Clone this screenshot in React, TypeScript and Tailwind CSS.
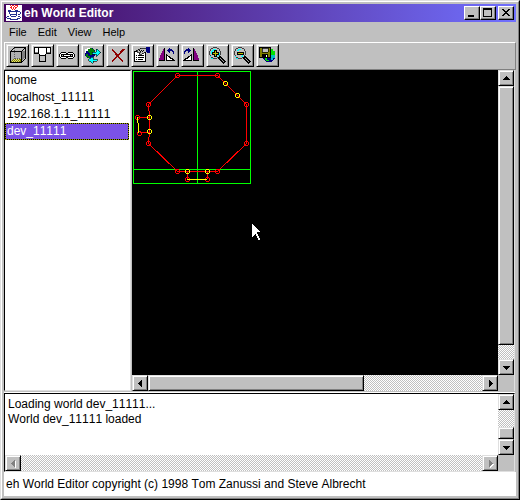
import { useState } from 'react'
import type { ReactNode } from 'react'

const menus = ['File', 'Edit', 'View', 'Help']

const worlds = ['home', 'localhost_11111', '192.168.1.1_11111', 'dev_11111']

const log = 'Loading world dev_11111...\nWorld dev_11111 loaded'

const tools: { label: string; icon: ReactNode }[] = [
  {
    label: 'Wireframe',
    icon: (
      <>
        <path d="M3 5h10v11H3z" fill="#b0b0b0" />
        <path d="M5 13h9v1h-1v2H3v-1h1v-1h1z" fill="#808000" />
        <path d="M5 14h1v1H5zM7 14h1v1H7zM9 14h1v1H9zM11 14h1v1h-1zM6 13h1v1H6zM8 13h1v1H8zM10 13h1v1h-1zM4 15h1v1H4zM6 15h1v1H6zM8 15h1v1H8zM10 15h1v1h-1z" fill="#e0e080" />
        <path d="M6.5 2v11M6.5 12.5H17" stroke="#606060" strokeDasharray="1 1" fill="none" />
        <path d="M14 5h3v7h-1v1h-1v1h-1z" fill="#808080" />
        <path d="M2.5 5.5h11v11h-11zM2.5 5.5l4-4h11v11l-4 4M13.5 5.5l4-4" stroke="#000" fill="none" />
      </>
    ),
  },
  {
    label: 'Sector',
    icon: (
      <>
        <path d="M1.5 1.5h16v6h-16z" fill="#fff" stroke="#000" />
        <path d="M5 2h1v6H5zM13 2h1v6h-1z" fill="#000" />
        <path d="M2 6h3v1H2zM14 6h3v1h-3z" fill="#808080" />
        <path d="M6 2h7v7H6z" fill="#fff" />
        <path d="M6.5 9.5h6v6h-6z" fill="#c0c0c0" stroke="#000" />
        <path d="M6 8h1v2H6zM12 8h1v2h-1z" fill="#000" />
      </>
    ),
  },
  {
    label: 'Link',
    icon: (
      <>
        <path d="M3 6h5v1h2V6h5v1h1v1h1v3h-1v1h-1v1h-5v-1H8v1H3v-1H2v-1H1V8h1V7h1z" fill="#000" />
        <path d="M3 7h5v1H3zM2 8h1v3H2zM3 11h5v1H3zM10 7h5v1h-5zM15 8h1v3h-1zM10 11h5v1h-5zM6 9h6v1H6z" fill="#fff" />
        <path d="M4 9h1v1H4zM13 9h1v1h-1z" fill="#c0c0c0" />
      </>
    ),
  },
  {
    label: 'Reload world',
    icon: (
      <>
        <circle cx="7" cy="7" r="5.5" fill="#000080" />
        <path d="M5 2h4v1h2v2h1v2H9v2H7V7H6V6H5z" fill="#008000" />
        <path d="M3 8h2v2h2v2H5v-1H3z" fill="#008000" />
        <path d="M2 3h2V2h3v1H5v2H3v2H2z" fill="#fff" />
        <path d="M9 6h4V3h1l4 3.500l-4 3.500h-1V8H9z" fill="#00ffff" stroke="#000" strokeWidth="0.6" />
        <path d="M14 13h-4v-2H9l-4 3 4 3h1v-2h4z" fill="#00ffff" stroke="#000" strokeWidth="0.6" />
      </>
    ),
  },
  {
    label: 'Delete',
    icon: <path d="M4 3.5l11 12M16 3L4 15.5" stroke="#900000" strokeWidth="1.6" fill="none" />,
  },
  {
    label: 'Properties',
    icon: (
      <>
        <path d="M1.5 5.5h11v10h-11z" fill="#fff" stroke="#000" />
        <path d="M3 9h1v1H3zM5 9h6v1H5zM3 11h1v1H3zM5 11h6v1H5zM3 13h1v1H3zM5 13h5v1H5z" fill="#000" />
        <path d="M3 4h2V3h2V2h6v4h-2v1H9v1H6V7h1V6H4V5H3z" fill="#c0c0c0" stroke="#000" strokeWidth="0.7" />
        <path d="M6 4h1v1H6zM8 4h1v1H8zM7 5h1v1H7zM9 5h1v1H9zM10 4h1v1h-1z" fill="#000" />
        <path d="M13 1h4v6h-3V6h-1z" fill="#000080" />
      </>
    ),
  },
  {
    label: 'Rotate left',
    icon: (
      <>
        <path d="M6 3v11H1v-2h1v-3h1V7h1V5h1V3z" fill="#800080" />
        <path d="M6.5 2v12.5H1" stroke="#000" fill="none" />
        <path d="M8 8h1v1h1v1h2v1h1v1h2v1h1v1h1v1H8zM9 10v4h5v-1h-2v-1h-1v-1h-1v-1z" fill="#000" fillRule="evenodd" />
        <path d="M9 10h1v1h1v1h1v1h2v1H9z" fill="#fff" />
        <path d="M9 4h1V3h1V2h1v1h2v1h1v1h1v3h-1V6h-1V5h-2v2h-1V6h-1V5H9z" fill="#000080" />
      </>
    ),
  },
  {
    label: 'Rotate right',
    icon: (
      <>
        <path d="M11 3h1v2h1v2h1v2h1v3h1v2h-5z" fill="#800080" />
        <path d="M10.500 2v12.500H16" stroke="#000" fill="none" />
        <path d="M9 8H8v1H7v1H5v1H4v1H2v1H1v1H0v1h9z" fill="#000" />
        <path d="M8 10H7v1H6v1H5v1H3v1h5z" fill="#fff" />
        <path d="M8 4H7V3H6V2H5v1H3v1H2v1H1v3h1V6h1V5h2v2h1V6h1V5h1z" fill="#000080" />
      </>
    ),
  },
  {
    label: 'Zoom in',
    icon: (
      <>
        <circle cx="7" cy="7" r="5.5" fill="#c0c0c0" stroke="#404040" />
        <path d="M3 5h1V4h1V3h3v1H6v1H5v3H3zM11 7h1v2h-1v1h-1v1H8v-1h2V8h1zM2 10h1v1H2zM3 12h2v1H3z" fill="#00ffff" />
        <path d="M6 4h3v2h2v3H9v2H6V9H4V6h2z" fill="#000" />
        <path d="M7 5h1v2h2v1H8v2H7V8H5V7h2z" fill="#c0c000" />
        <path d="M11 11l6 6" stroke="#000" strokeWidth="3" />
        <path d="M12 12l4 4" stroke="#a0a0a0" />
      </>
    ),
  },
  {
    label: 'Zoom out',
    icon: (
      <>
        <circle cx="7" cy="7" r="5.5" fill="#c0c0c0" stroke="#404040" />
        <path d="M3 5h1V4h1V3h3v1H6v1H3zM11 8v1h-1v2H8v-1h1V9zM2 10h1v1H2zM3 12h2v1H3z" fill="#00ffff" />
        <path d="M4 6h7v3H4z" fill="#000" />
        <path d="M5 7h5v1H5z" fill="#c0c000" />
        <path d="M11 11l6 6" stroke="#000" strokeWidth="3" />
        <path d="M12 12l4 4" stroke="#a0a0a0" />
      </>
    ),
  },
  {
    label: 'Save world',
    icon: (
      <>
        <circle cx="11" cy="9.500" r="6.500" fill="#000080" />
        <path d="M12 3h3v2h2v5h-1v2h-3v-2h-1zM7 12h2v2h2v1H8v-1H7z" fill="#00e000" />
        <path d="M13 9h4v3h-2v2h-2z" fill="#00c0c0" />
        <path d="M1.500 1.500h11v10h-11z" fill="#808000" stroke="#000" />
        <path d="M4 2h6v4H4z" fill="#c0c0c0" stroke="#000" strokeWidth="0.7" />
        <path d="M4 8h6v3H4z" fill="#000" />
        <path d="M8 9h1v2H8z" fill="#fff" />
      </>
    ),
  },
]

const redNodes = [
  [45, 5], [85, 5], [114, 34], [114, 73], [85, 101], [45, 101], [16, 73], [16, 34],
  [5, 47], [7, 63], [55, 109], [75, 109],
]

const yellowNodes = [
  [93, 13], [105, 25], [17, 47], [17, 61], [55, 101], [75, 101],
]

const arrows = {
  up: 'M7 5h1v1h1v1h1v1h1v1H4V8h1V7h1V6h1z',
  down: 'M4 6h7v1h-1v1H9v1H8v1H7V9H6V8H5V7H4z',
  left: 'M9 4v7H8v-1H7V9H6V8H5V7h1V6h1V5h1V4z',
  right: 'M6 4h1v1h1v1h1v1h1v1H9v1H8v1H7v1H6z',
}

function ScrollButton({ dir, disabled }: { dir: keyof typeof arrows; disabled?: boolean }) {
  return (
    <button
      disabled={disabled}
      aria-label={`Scroll ${dir}`}
      className="size-4 shrink-0 border border-t-[#dfdfdf] border-l-[#dfdfdf] border-r-black border-b-black bg-[#c0c0c0] shadow-[inset_1px_1px_0_#fff,inset_-1px_-1px_0_#808080]"
    >
      <svg viewBox="0 0 14 14" className="size-3.5" shapeRendering="crispEdges">
        {disabled && <path d={arrows[dir]} fill="#fff" transform="translate(1 1)" />}
        <path d={arrows[dir]} fill={disabled ? '#808080' : '#000'} />
      </svg>
    </button>
  )
}

function Thumb({ className }: { className: string }) {
  return (
    <div
      className={`border border-t-[#dfdfdf] border-l-[#dfdfdf] border-r-black border-b-black bg-[#c0c0c0] shadow-[inset_1px_1px_0_#fff,inset_-1px_-1px_0_#808080] ${className}`}
    />
  )
}

const track = 'bg-[repeating-conic-gradient(#c0c0c0_0_25%,#fff_0_50%)] bg-[length:2px_2px]'

function MapView() {
  return (
    <svg width="125" height="120" shapeRendering="crispEdges" fill="none" role="img" aria-label="Map of dev_11111">
      <g stroke="#00ff00">
        <path d="M1.5 1.5h117v112h-117zM65.5 1v112M1 99.5h117" />
      </g>
      <g stroke="#ff0000">
        <path d="M45.5 5.5h40l29 29v39l-29 28h-40l-29-28l1-12v-14l-1-13zM5.5 47.5h12M7.5 62.5h10M55.5 101v8M75.5 101v8" />
        {redNodes.map(([x, y]) => (
          <path key={`${x}-${y}`} d={`M${x - 1} ${y - 1.5}h3M${x - 1} ${y + 2.5}h3M${x - 1.5} ${y - 1}v3M${x + 2.5} ${y - 1}v3`} />
        ))}
      </g>
      <g stroke="#ffff00">
        <path d="M5.5 47v6M6.5 53v10M55 109.5h20" />
        {yellowNodes.map(([x, y]) => (
          <path key={`${x}-${y}`} d={`M${x - 1} ${y - 1.5}h3M${x - 1} ${y + 2.5}h3M${x - 1.5} ${y - 1}v3M${x + 2.5} ${y - 1}v3`} />
        ))}
      </g>
    </svg>
  )
}

function JavaLogo() {
  return (
    <svg viewBox="0 0 16 16" className="size-4" shapeRendering="crispEdges">
      <path d="M0 0h16v16H0z" fill="#fff" />
      <path d="M4 0h1v1H4zM6 0h2v1H6zM9 0h3v1H9zM5 1h1v1H5zM8 1h1v1H8zM11 1h1v1h-1zM4 2h2v1H4zM7 2h1v1H7zM9 2h2v1H9zM5 3h1v1H5zM7 3h1v1H7zM9 3h1v1H9zM6 4h1v1H6zM8 4h1v1H8z" fill="#ff2020" />
      <path d="M2 5h3v1H2zM9 5h3v1H9zM2 6h10v1H2zM12 6h2v1h-2zM14 7h1v2h-1zM12 9h2v1h-2zM3 7h1v2H3zM10 7h1v2h-1zM4 9h7v1H4zM4 10h1v1H4zM10 10h1v1h-1zM5 11h5v1H5zM1 11h2v1H1zM0 12h1v1H0zM12 11h2v1h-2zM14 12h1v1h-1zM1 13h4v1H1zM11 13h3v1h-3zM4 14h8v1H4z" fill="#203090" />
    </svg>
  )
}

const caption =
  'flex h-3.5 w-4 items-center justify-center border border-t-white border-l-white border-r-black border-b-black bg-[#c0c0c0] shadow-[inset_-1px_-1px_0_#808080]'

export default function App() {
  const [selected, setSelected] = useState('dev_11111')

  return (
    <div className="flex h-screen flex-col border border-t-[#dfdfdf] border-l-[#dfdfdf] border-r-black border-b-black bg-[#c0c0c0] font-['Liberation_Sans',Arial,sans-serif] text-xs text-black [font-kerning:none]">
      <div className="flex min-h-0 flex-1 flex-col border border-t-white border-l-white border-r-[#808080] border-b-[#808080] p-0.5">
        {/* Title bar */}
        <header className="flex h-[18px] shrink-0 items-center bg-linear-to-r from-[#40005c] to-[#7070ff] px-0.5">
          <JavaLogo />
          <h1 className="ml-0.5 flex-1 text-xs font-bold text-white">eh World Editor</h1>
          <button aria-label="Minimize" className={caption}>
            <svg viewBox="0 0 14 12" className="h-3 w-3.5" shapeRendering="crispEdges">
              <path d="M3 8h6v2H3z" />
            </svg>
          </button>
          <button aria-label="Maximize" className={caption}>
            <svg viewBox="0 0 14 12" className="h-3 w-3.5" shapeRendering="crispEdges">
              <path d="M2 1h9v9H2zM3 3v6h7V3z" fillRule="evenodd" />
            </svg>
          </button>
          <button aria-label="Close" className={`ml-0.5 ${caption}`}>
            <svg viewBox="0 0 14 12" className="h-3 w-3.5" shapeRendering="crispEdges">
              <path d="M3 2h2v1h1v1h2V3h1V2h2v1h-1v1H9v1H8v1h1v1h1v1h1v1H9V8H8V7H6v1H5v1H3V8h1V7h1V6h1V5H5V4H4V3H3z" />
            </svg>
          </button>
        </header>

        <nav className="flex h-5 shrink-0 items-center gap-[11px] px-[5px]">
          {menus.map((menu) => (
            <button key={menu} className="text-[11px]">
              {menu}
            </button>
          ))}
        </nav>

        {/* Toolbar */}
        <div className="flex h-7 shrink-0 gap-0.5 border border-t-white border-l-white border-r-[#808080] border-b-[#808080] px-px py-px">
          {tools.map((tool) => (
            <button
              key={tool.label}
              aria-label={tool.label}
              title={tool.label}
              className="size-[23px] shrink-0 border border-t-[#dfdfdf] border-l-[#dfdfdf] border-r-black border-b-black bg-[#c0c0c0] p-px shadow-[inset_1px_1px_0_#fff,inset_-1px_-1px_0_#808080]"
            >
              <svg viewBox="0 0 19 19" className="size-[19px]" shapeRendering="crispEdges">
                {tool.icon}
              </svg>
            </button>
          ))}
        </div>

        {/* World list and map */}
        <main className="flex min-h-0 flex-1 gap-px pr-px">
          <ul className="w-[127px] shrink-0 border border-t-black border-l-black border-r-[#dfdfdf] border-b-[#dfdfdf] bg-white pt-px pr-px">
            {worlds.map((world) => (
              <li key={world}>
                <button
                  onClick={() => setSelected(world)}
                  aria-pressed={world === selected}
                  className={`block h-[17px] w-full border border-dotted text-left leading-[15px] ${
                    world === selected ? 'border-[#a0a000] bg-black text-white' : 'border-transparent'
                  }`}
                >
                  <span className={`block px-px ${world === selected ? 'bg-[#7b52e7]' : ''}`}>{world}</span>
                </button>
              </li>
            ))}
          </ul>

          <section className="flex min-w-0 flex-1 flex-col border-r border-r-[#dfdfdf]">
            <div className="flex min-h-0 flex-1">
              <div className="relative min-w-0 flex-1 overflow-hidden bg-black">
                <MapView />
                {/* Mouse pointer */}
                <svg className="absolute top-[154px] left-[119px] h-[18px] w-3" viewBox="0 0 12 18" shapeRendering="crispEdges">
                  <path d="M1 0h1v1h1v1h1v1h1v1h1v1h1v1h1v1h1v1H6v2h1v2h1v2h1v2H7v-2H6v-2H5v-2H4v1H3v1H2v1H1z" fill="#fff" />
                </svg>
              </div>
              <div className={`flex w-4 flex-col ${track}`}>
                <ScrollButton dir="up" />
                <Thumb className="mb-3.5 flex-1" />
                <ScrollButton dir="down" />
              </div>
            </div>
            <div className="flex h-4 shrink-0">
              <div className={`flex flex-1 ${track}`}>
                <ScrollButton dir="left" />
                <Thumb className="w-[59%]" />
                <div className="flex-1" />
                <ScrollButton dir="right" />
              </div>
              <div className="size-4 bg-[#c0c0c0]" />
            </div>
          </section>
        </main>

        {/* Message log */}
        <section className="mt-px mr-px flex h-20 shrink-0 flex-col border-t border-t-white">
          <div className="flex min-h-0 flex-1 flex-col border border-t-black border-l-black border-r-[#dfdfdf] border-b-[#dfdfdf]">
            <div className="flex min-h-0 flex-1 bg-white">
              <textarea
                readOnly
                aria-label="Messages"
                value={log}
                className="min-w-0 flex-1 resize-none overflow-hidden bg-white px-[3px] py-[3px] leading-[15px] outline-none"
              />
              <div className={`flex w-4 flex-col ${track}`}>
                <ScrollButton dir="up" />
                <div className="flex-1" />
                <Thumb className="h-3" />
                <ScrollButton dir="down" />
              </div>
            </div>
            <div className="flex h-4 shrink-0">
              <div className={`flex flex-1 justify-between ${track}`}>
                <ScrollButton dir="left" disabled />
                <ScrollButton dir="right" disabled />
              </div>
              <div className="size-4 bg-[#c0c0c0]" />
            </div>
          </div>
        </section>

        <footer className="flex h-6 shrink-0 items-center bg-white px-0.5">
          eh World Editor copyright (c) 1998 Tom Zanussi and Steve Albrecht
        </footer>
      </div>
    </div>
  )
}
